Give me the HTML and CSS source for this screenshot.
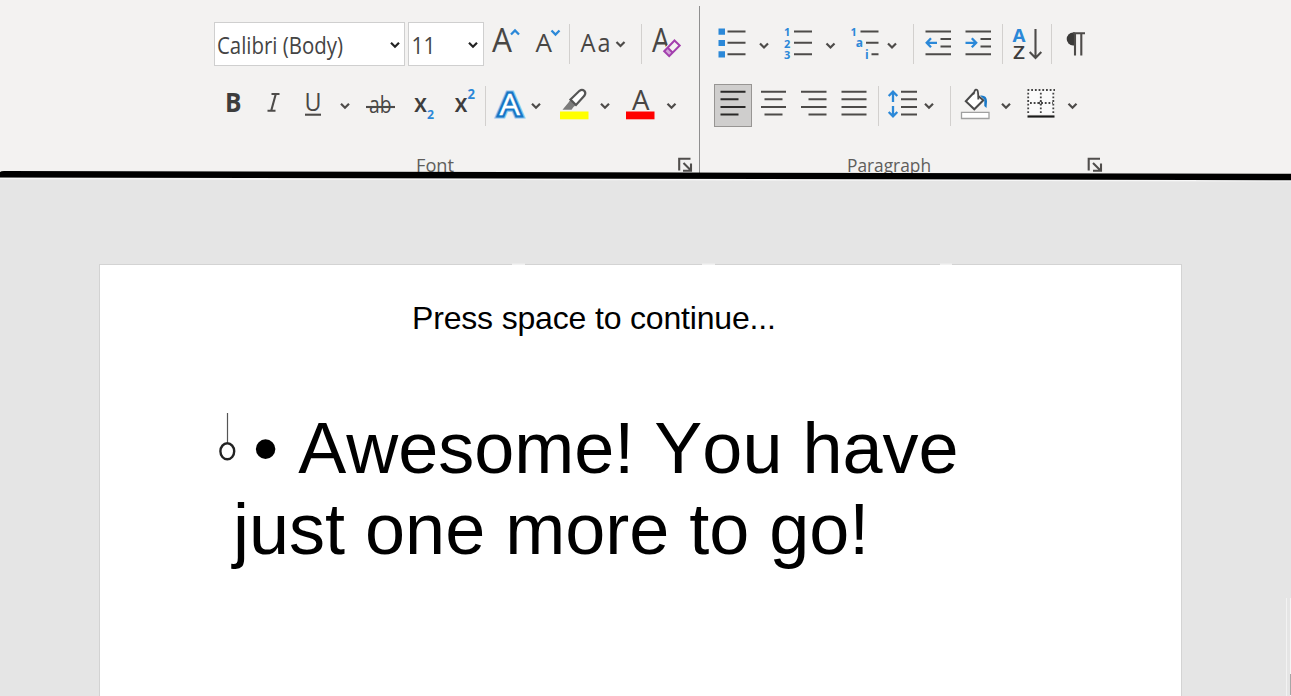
FILE: index.html
```html
<!DOCTYPE html>
<html lang="en">
<head>
<meta charset="utf-8">
<title>Document</title>
<link rel="stylesheet" href="styles.css">
</head>
<body>
<header class="ribbon">
  <section class="group group-font">
    <div class="row">
      <div class="combo combo-name"><svg viewBox="215 24 189 42" width="189" height="42"><text class="field" x="217" y="54.500" textLength="126" lengthAdjust="spacingAndGlyphs">Calibri (Body)</text><path class="chev strong" d="M391 43.7l4 4 4-4"/></svg></div>
      <div class="combo combo-size"><svg viewBox="409 24 74 42" width="74" height="42"><text class="field" x="411.500" y="54.500" textLength="24" lengthAdjust="spacingAndGlyphs">11</text><path class="chev strong" d="M469 43.700l4 4 4-4"/></svg></div>
      <svg viewBox="484 20 46 48" width="46" height="48"><text class="light" x="492" y="52" font-size="33" textLength="20" lengthAdjust="spacingAndGlyphs">A</text><path class="caret" d="M511 34.500l4-4 4 4"/></svg>
      <svg viewBox="530 20 39 48" width="39" height="48"><text class="light" x="535.500" y="52" font-size="26" textLength="16.500" lengthAdjust="spacingAndGlyphs">A</text><path class="caret" d="M551.500 30.500l4 4 4-4"/></svg>
      <i class="sep"></i>
      <svg viewBox="570 20 71 48" width="71" height="48"><text class="light" x="580.500" y="52" font-size="26" textLength="15" lengthAdjust="spacingAndGlyphs">A</text><text class="light" x="597.500" y="52" font-size="25" textLength="13" lengthAdjust="spacingAndGlyphs">a</text><path class="chev" d="M616.500 42l4 4 4-4"/></svg>
      <i class="sep"></i>
      <svg viewBox="642 20 48 48" width="48" height="48"><text class="light" x="652" y="52" font-size="33" textLength="18" lengthAdjust="spacingAndGlyphs">A</text><path d="M674.500 40.500l5.200 5-10.500 10.700-5-5z" fill="#f3f2f1" stroke="#f3f2f1" stroke-width="4"/><path d="M667.500 47.500l5 5-3.500 3.700-4.800-5z" fill="#d3a4d9"/><path d="M674.500 40.500l5.200 5-10.500 10.700-5-5zM667.500 47.500l5 5" fill="none" stroke="#a33fae" stroke-width="2"/></svg>
    </div>
    <div class="row row-lower">
      <svg viewBox="214 82 39 48" width="39" height="48"><text class="heavy bold" x="225" y="111.500" font-size="26" textLength="16.500" lengthAdjust="spacingAndGlyphs">B</text></svg>
      <svg viewBox="253 82 40 48" width="40" height="48"><path class="ink" d="M271.500 94H279.500M267.500 110.700H275.500M275.800 94L271.200 110.700"/></svg>
      <svg viewBox="293 82 67 48" width="67" height="48"><text class="plain" x="304.500" y="111" font-size="25" textLength="17" lengthAdjust="spacingAndGlyphs">U</text><path class="ink" d="M305 114.700h16"/><path class="chev" d="M341 103.700l4 4 4-4"/></svg>
      <svg viewBox="360 82 46 48" width="46" height="48"><text class="plain" x="369" y="113" font-size="24" textLength="22.500" lengthAdjust="spacingAndGlyphs">ab</text><path class="ink" d="M366 107h29"/></svg>
      <svg viewBox="406 82 40 48" width="40" height="48"><text class="heavy" x="414" y="111.500" font-size="25" textLength="13" lengthAdjust="spacingAndGlyphs">x</text><text class="blue" x="427" y="119" font-size="13" textLength="7" lengthAdjust="spacingAndGlyphs">2</text></svg>
      <svg viewBox="446 82 39 48" width="39" height="48"><text class="heavy" x="454.500" y="111.500" font-size="25" textLength="13" lengthAdjust="spacingAndGlyphs">x</text><text class="blue" x="467.500" y="99" font-size="13.500" textLength="7.500" lengthAdjust="spacingAndGlyphs">2</text></svg>
      <i class="sep"></i>
      <svg viewBox="486 82 68 48" width="68" height="48"><g font-size="30" stroke-linejoin="miter" stroke-miterlimit="2.200"><text class="fx fx-glow" x="499.500" y="114.500" textLength="20.500" lengthAdjust="spacingAndGlyphs">A</text><text class="fx fx-edge" x="499.500" y="114.500" textLength="20.500" lengthAdjust="spacingAndGlyphs">A</text><text class="fx fx-core" x="499.500" y="114.500" textLength="20.500" lengthAdjust="spacingAndGlyphs">A</text></g><path class="chev" d="M532 103.700l4 4 4-4"/></svg>
      <svg viewBox="554 82 66 48" width="66" height="48"><path d="M562.500 109.800L568.500 102.500 570.500 99.500 576 105 573.500 107 571.500 109.800z" fill="#7b7b7b"/><path d="M570.500 99.500L579.500 90.800Q582 88.800 584.300 90.800 586.300 93 584.300 95.800L576 105z" fill="#fff" stroke="#555" stroke-width="2.200"/><path d="M560 111.500h28.500v7.800h-28.500z" fill="#ff0"/><path class="chev" d="M601 103.700l4 4 4-4"/></svg>
      <svg viewBox="620 82 62 48" width="62" height="48"><text class="light" x="632" y="109.500" font-size="28" textLength="17.500" lengthAdjust="spacingAndGlyphs">A</text><path d="M626 111.500h28.500v7.800h-28.500z" fill="#f00"/><path class="chev" d="M667.500 103.700l4 4 4-4"/></svg>
    </div>
    <div class="caption">
      <svg viewBox="214 154 464 24" width="464" height="24"><text class="label" x="416" y="172" textLength="38" lengthAdjust="spacingAndGlyphs">Font</text></svg>
      <svg viewBox="678 154 16 24" width="16" height="24"><path class="launch" d="M679.200 170.500V158.700H690.500M683.500 163l7 7M691 163.500v7.300h-8"/></svg>
    </div>
  </section>
  <section class="group group-para">
    <div class="row">
      <svg viewBox="714 20 64 48" width="64" height="48"><path d="M718.500 28.500h6.500v6.300h-6.500zM718.500 40h6.500v6h-6.500zM718.500 51.200h6.500v6.300h-6.500z" fill="#2b88d8"/><path class="ink" d="M727.500 31.500h18M727.500 42.800h18M727.500 54.200h18"/><path class="chev" d="M760 43.500l4 4 4-4"/></svg>
      <svg viewBox="778 20 66 48" width="66" height="48"><g class="blue" font-size="11"><text x="784" y="36">1</text><text x="784" y="47.500">2</text><text x="784" y="59">3</text></g><path class="ink" d="M794 31.500h18M794 42.800h18M794 54.200h18"/><path class="chev" d="M826.500 43.500l4 4 4-4"/></svg>
      <svg viewBox="844 20 69 48" width="69" height="48"><g class="blue" font-size="11"><text x="850.500" y="36">1</text><text x="855.800" y="47.300" font-size="12">a</text><text x="865" y="59" font-size="12">i</text></g><path class="ink" d="M860.500 31.500h18M866 42.800h12.500M871.500 54.200h7"/><path class="chev" d="M888 43.500l4 4 4-4"/></svg>
      <i class="sep"></i>
      <svg viewBox="914 20 46 48" width="46" height="48"><path class="ink" d="M925.500 31.500h25.500M940.500 39h10.500M940.500 46.500h10.500M925.500 54.200h25.500"/><path class="arrow" d="M937 42.800H927M931 38.300L926.700 42.800 931 47.300"/></svg>
      <svg viewBox="960 20 42 48" width="42" height="48"><path class="ink" d="M965.500 31.500h25.500M980.500 39h10.500M980.500 46.500h10.500M965.500 54.200h25.500"/><path class="arrow" d="M965.500 42.800H976M971.800 38.300L976.200 42.800 971.800 47.300"/></svg>
      <i class="sep"></i>
      <svg viewBox="1003 20 48 48" width="48" height="48"><text class="blue" x="1012.500" y="42.300" font-size="18.500" textLength="13" lengthAdjust="spacingAndGlyphs">A</text><text class="heavy" x="1013" y="59" font-size="18.500" textLength="12" lengthAdjust="spacingAndGlyphs">Z</text><path class="ink" d="M1035.500 29V58M1029.700 52L1035.500 58 1041.300 52"/></svg>
      <i class="sep"></i>
      <svg viewBox="1052 20 50 48" width="50" height="48"><path d="M1075 32.500h-2a6.300 6.500 0 0 0 0 13h2z" fill="#3b3a39"/><path class="ink" d="M1073 33.300H1085M1075 33V55.500M1081.300 33V55.500"/></svg>
    </div>
    <div class="row row-lower">
      <div class="pressed"><svg viewBox="715 85 36 41" width="36" height="41"><path class="ink dark" d="M720.500 91.700h25M720.500 99.300h18M720.500 107h25M720.500 114.500h18"/></svg></div>
      <svg viewBox="752 82 42 48" width="42" height="48"><path class="ink" d="M761 91.700h25M764.500 99.300h18M761 107h25M764.500 114.500h18"/></svg>
      <svg viewBox="794 82 40 48" width="40" height="48"><path class="ink" d="M801 91.700h25.500M808.500 99.300h18M801 107h25.500M808.500 114.500h18"/></svg>
      <svg viewBox="834 82 44 48" width="44" height="48"><path class="ink" d="M841.500 91.700h25M841.500 99.300h25M841.500 107h25M841.500 114.500h25"/></svg>
      <i class="sep"></i>
      <svg viewBox="879 82 71 48" width="71" height="48"><path class="arrow" d="M893 102V92M888.700 96L893 91.700 897.300 96M893 106V116M888.700 112L893 116.300 897.300 112"/><path class="ink" d="M901 91.700h16M901 99.300h16M901 107h16M901 114.500h16"/><path class="chev" d="M925 103.700l4 4 4-4"/></svg>
      <i class="sep"></i>
      <svg viewBox="951 82 69 48" width="69" height="48"><path d="M974 92.500L965.800 101.200 974.300 109.300 983.300 100.300 978.300 96" fill="#fff" stroke="#4a4a4a" stroke-width="2"/><path d="M973.300 94.500L974.600 91Q975.800 88.800 977.300 90.200 978.300 91.200 978.300 99.500" fill="none" stroke="#4a4a4a" stroke-width="1.800"/><path d="M980 95.500Q987 94.500 987 101.500L986.500 108 984.300 106V99.500z" fill="#1878c7"/><path d="M961.500 112.300h27.500v6.200h-27.500z" fill="#fff" stroke="#a0a0a0" stroke-width="1.300"/><path class="chev" d="M1002 103.700l4 4 4-4"/></svg>
      <svg viewBox="1020 82 82 48" width="82" height="48"><path d="M1028 90h26v24h-26z" fill="#fafafa"/><path class="dots" d="M1027.500 90H1055M1030 103H1053M1028.200 92.700V114M1040.800 92.700V114M1053.300 92.700V114"/><circle cx="1040.800" cy="103" r="1.500" fill="none" stroke="#444"/><path d="M1027.500 116.500h27" stroke="#1b1b1b" stroke-width="2.200"/><path class="chev" d="M1068.500 103.700l4 4 4-4"/></svg>
    </div>
    <div class="caption">
      <svg viewBox="714 154 372 24" width="372" height="24"><text class="label" x="847" y="172" textLength="84" lengthAdjust="spacingAndGlyphs">Paragraph</text></svg>
      <svg viewBox="1086 154 18 24" width="18" height="24"><path class="launch" d="M1088.700 170.500V158.700H1100M1093 163l7 7M1101 163.500v7.300h-8"/></svg>
    </div>
  </section>
  <svg class="rule" viewBox="0 168 1291 16" width="1291" height="16"><path d="M0 178L1291 180V184H0z" fill="#e5e5e5"/><path d="M0 178.500L1291 180.700" stroke="#f7f7f7" stroke-width="1.500"/><path d="M0 172Q1 171 4 171L250 171.500 1291 173.800V180.200L250 177.900 0 177.500z"/></svg>
</header>
<main class="workspace">
  <article class="page">
    <svg class="edge" viewBox="500 263 460 2" width="460" height="2"><path d="M512 264.300h13M702 264.300h13M940 264.300h12" stroke="#f2f2f2" stroke-width="1.400"/></svg>
    <p class="prompt">Press space to continue...</p>
    <svg class="anchor" viewBox="217 411 22 54" width="22" height="54"><path d="M227.500 413v29" stroke="#555" stroke-width="1.200"/><ellipse cx="227.300" cy="451.300" rx="6.900" ry="8" fill="none" stroke="#222" stroke-width="2.400"/></svg>
    <p class="message">&nbsp;• Awesome! You have<br>just one more to go!</p>
  </article>
  <aside class="scroll"><div class="thumb"></div></aside>
</main>
</body>
</html>
```

FILE: styles.css
```css
* { box-sizing: border-box; }

body {
  margin: 0;
  width: 1291px;
  height: 696px;
  overflow: hidden;
  display: flex;
  flex-direction: column;
  background: #e5e5e5;
  font-family: "Liberation Sans", Arial, sans-serif;
}

svg { display: block; flex: none; overflow: visible; }

/* Ribbon */
.ribbon {
  position: relative;
  display: flex;
  height: 176px;
  flex: none;
  padding-top: 6px;
  background: #f3f2f1;
}

.group { padding-top: 14px; font-family: "Open Sans", "Noto Sans", sans-serif; }
.group-font { width: 700px; padding-left: 214px; border-right: 1px solid #8f8f8f; }
.group-para { padding-left: 14px; }

.row { display: flex; align-items: center; height: 48px; }
.row-lower { margin-top: 14px; }
.caption { display: flex; margin-top: 24px; }

.combo { height: 44px; background: #fff; border: 1px solid #cfcfcf; }
.combo-name { width: 191px; margin-right: 3px; }
.combo-size { width: 76px; }

.sep { width: 1px; height: 40px; background: #d2d0ce; flex: none; }
.pressed { width: 38px; height: 43px; margin-bottom: 2px; background: #cfcecd; border: 1px solid #979593; }

.field { font-size: 23px; fill: #444; }
.light { font-weight: 400; fill: #484644; }
.plain { fill: #484644; }
.heavy { font-weight: 600; fill: #3d3d3d; }
.bold { font-weight: 700; }
.blue { font-weight: 700; fill: #2b88d8; }
.label { font-size: 19px; fill: #605e5c; }

.ink { fill: none; stroke: #4d4b49; stroke-width: 2.1; }
.dark { stroke: #292827; }
.chev { fill: none; stroke: #4d4b49; stroke-width: 2.2; }
.strong { stroke: #222; }
.caret, .arrow { fill: none; stroke: #2b88d8; stroke-width: 2.3; }
.launch { fill: none; stroke: #504e4c; stroke-width: 2.1; }
.dots { fill: none; stroke: #444; stroke-width: 1.8; stroke-dasharray: 1.8 1.9; }

.fx { font-weight: 400; }
.fx-glow { fill: #8cc4ee; stroke: #8cc4ee; stroke-width: 7; }
.fx-edge { fill: #1776c5; stroke: #1776c5; stroke-width: 4.8; }
.fx-core { fill: #fff; stroke: #fff; stroke-width: 0.3; }

.rule { position: absolute; left: 0; top: 168px; }

/* Document area */
.workspace {
  position: relative;
  flex: 1;
  display: flex;
  padding: 88px 0 0 99px;
}

.page {
  position: relative;
  width: 1083px;
  background: #fff;
  border: 1px solid #d3d3d3;
  border-bottom: 0;
  padding: 35px 0 0 133px;
}

.prompt {
  margin: 0 0 0 179px;
  font-size: 32px;
  line-height: 37px;
  letter-spacing: -0.17px;
  color: #000;
}
.message {
  margin: 71px 0 0;
  font-size: 72px;
  line-height: 81px;
  font-kerning: none;
  white-space: nowrap;
  color: #000;
}

.edge { position: absolute; left: 400px; top: -2px; }
.anchor { position: absolute; left: 117px; top: 146px; }

.scroll {
  position: absolute;
  right: 0;
  bottom: 0;
  width: 5px;
  height: 98px;
  padding: 76px 0 1px 4px;
  border-left: 1px solid #f3f3f3;
  background: linear-gradient(to right, #e5e5e5 3px, #f5f5f5 3px);
}
.thumb { width: 1px; height: 21px; margin-left: -1px; background: #a6a6a6; }
```
